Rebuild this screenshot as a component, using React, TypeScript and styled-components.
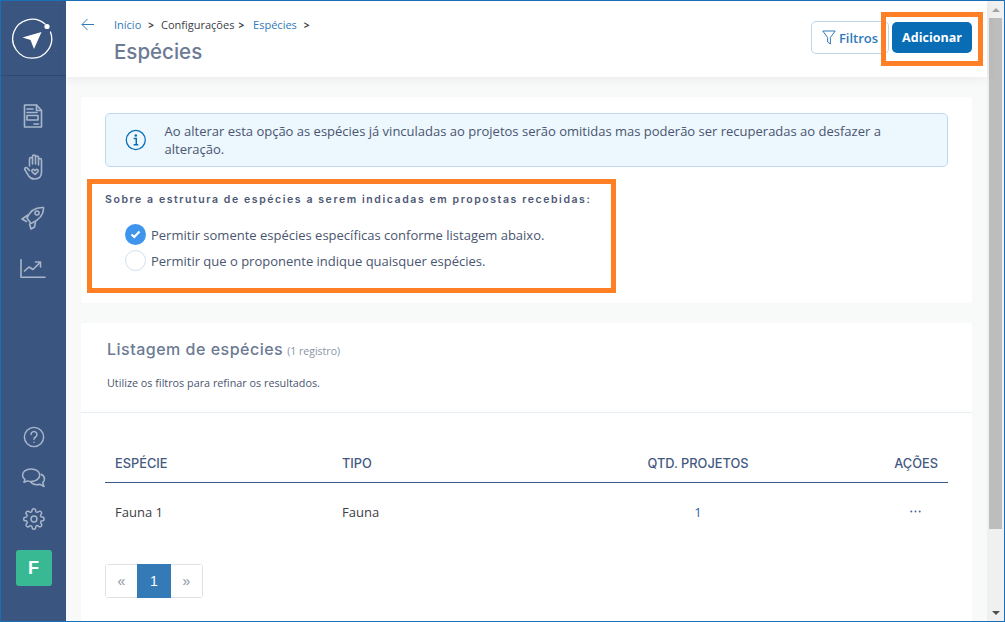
import React from 'react'
import styled, { createGlobalStyle } from 'styled-components'

const colors = {
  frame: '#1a6fb5',
  navy: '#3a5680',
  navyLine: '#2f4a72',
  icon: '#a9b6ca',
  link: '#2f7ab8',
  blue: '#086db5',
  heading: '#6c7a94',
  text: '#4a5570',
  dark: '#3c4048',
  orange: '#ff7f27',
  line: '#e6eef4',
}

const GlobalStyle = createGlobalStyle`
  html, body { margin: 0; padding: 0; height: 100%; overflow: hidden; }
  body { font-family: 'Open Sans', 'Liberation Sans', sans-serif; background: #fff; }
  * { box-sizing: border-box; }
`

const Frame = styled.div`
  display: flex;
  width: 1005px;
  height: 622px;
  border: 1px solid ${colors.frame};
  position: relative;
  overflow: hidden;
`

const Sidebar = styled.nav`
  width: 65px;
  flex: none;
  display: flex;
  flex-direction: column;
  align-items: center;
  background: ${colors.navy};
`

const LogoBox = styled.div`
  width: 100%;
  height: 75px;
  flex: none;
  display: flex;
  align-items: center;
  justify-content: center;
  padding-right: 3px;
  border-bottom: 1px solid ${colors.navyLine};
`

const NavTop = styled.div`
  display: flex;
  flex-direction: column;
  align-items: center;
  gap: 26px;
  padding: 28px 1px 0 0;
`

const NavBottom = styled.div`
  margin-top: auto;
  display: flex;
  flex-direction: column;
  align-items: center;
  gap: 20px;
  padding-bottom: 35px;
`

const Avatar = styled.div`
  width: 36px;
  height: 36px;
  border-radius: 3px;
  background: #38b993;
  color: #fff;
  font: 700 18px 'Liberation Sans', sans-serif;
  display: flex;
  align-items: center;
  justify-content: center;
`

const Main = styled.main`
  flex: 1;
  min-width: 0;
  display: flex;
  flex-direction: column;
  background: #f8f9f9;
`

const Header = styled.header`
  height: 76px;
  flex: none;
  display: flex;
  background: #fff;
  padding: 0 15px;
  box-shadow: 0 2px 10px rgba(60, 70, 90, 0.07);
  position: relative;
`

const BackLink = styled.div`
  width: 33px;
  display: flex;
  align-items: flex-start;
  padding-top: 17px;
`

const TitleBlock = styled.div`
  flex: 1;
  padding-top: 16px;
`

const Crumbs = styled.div`
  display: flex;
  align-items: center;
  height: 15px;
  font-size: 11px;
`

const Crumb = styled.span<{ $link?: boolean }>`
  color: ${({ $link }) => ($link ? colors.link : colors.dark)};
`

const CrumbSep = styled.span<{ $tight?: boolean }>`
  color: ${colors.dark};
  font-size: 10px;
  font-weight: 700;
  margin: ${({ $tight }) => ($tight ? '0 9px 0 4px' : '0 7px 0 7px')};
`

const Title = styled.h1`
  margin: 8px 0 0;
  font: 500 20.5px/24px 'Inter', 'Liberation Sans', sans-serif;
  color: ${colors.heading};
`

const Actions = styled.div`
  display: flex;
  gap: 3px;
  padding-top: 20px;
`

const FilterButton = styled.button`
  width: 78px;
  height: 33px;
  display: flex;
  align-items: center;
  justify-content: center;
  gap: 3px;
  padding: 0;
  background: #fff;
  border: 1px solid #bcd6ea;
  border-radius: 5px;
  color: ${colors.link};
  font: 600 13px 'Open Sans', sans-serif;
`

const AddButton = styled.button`
  width: 80px;
  height: 31px;
  margin-top: 1px;
  padding: 0;
  background: ${colors.blue};
  border: none;
  border-radius: 5px;
  color: #fff;
  font: 700 12.5px 'Open Sans', sans-serif;
`

const Content = styled.div`
  flex: 1;
  min-height: 0;
  overflow: hidden;
  padding: 20px 15px 0;
  display: flex;
  flex-direction: column;
  gap: 20px;
`

const Card = styled.section`
  background: #fff;
  border-radius: 3px;
`

const OptionsCard = styled(Card)`
  height: 206px;
  flex: none;
  padding: 16px 24px 0;
`

const Notice = styled.div`
  height: 54px;
  display: flex;
  align-items: center;
  gap: 18px;
  padding: 0 18px 0 19px;
  background: #ecf7fe;
  border: 1px solid #bfd9f2;
  border-radius: 5px;
  color: ${colors.text};
  font-size: 13px;
  line-height: 18px;
`

const OptionsTitle = styled.h2`
  margin: 25px 0 0;
  font: 600 10.5px/16px 'Inter', 'Liberation Sans', sans-serif;
  letter-spacing: 1.58px;
  color: #4d5873;
`

const Options = styled.div`
  display: flex;
  flex-direction: column;
  gap: 5px;
  margin: 16px 0 0 20px;
`

const Option = styled.label`
  display: flex;
  align-items: center;
  gap: 5px;
  height: 21px;
  font-size: 13px;
  color: ${colors.text};
`

const RadioDot = styled.span<{ $checked?: boolean }>`
  width: 21px;
  height: 21px;
  border-radius: 50%;
  display: flex;
  align-items: center;
  justify-content: center;
  background: ${({ $checked }) => ($checked ? '#3f94ee' : '#fff')};
  border: ${({ $checked }) => ($checked ? 'none' : '1px solid #cfe1ee')};
`

const ListCard = styled(Card)`
  flex: 1;
  min-height: 0;
`

const ListHead = styled.div`
  height: 90px;
  padding: 16px 26px 0;
  border-bottom: 1px solid ${colors.line};
`

const ListTitle = styled.h2`
  margin: 0;
  font: 500 16px/20px 'Inter', 'Liberation Sans', sans-serif;
  letter-spacing: 0.5px;
  color: ${colors.heading};
`

const ListCount = styled.small`
  margin-left: 4px;
  font: 400 10.5px 'Open Sans', sans-serif;
  letter-spacing: 0;
  color: #8a93a6;
`

const ListHint = styled.p`
  margin: 17px 0 0;
  font-size: 10.8px;
  line-height: 14px;
  color: ${colors.text};
`

const TableWrap = styled.div`
  padding: 33px 24px 0;
`

const Table = styled.table`
  width: 100%;
  border-collapse: collapse;
  table-layout: fixed;
`

const Th = styled.th<{ $align?: string; $width: number }>`
  width: ${({ $width }) => $width}px;
  height: 36px;
  padding: 0 10px;
  text-align: ${({ $align }) => $align || 'left'};
  font: 500 12.8px 'Inter', 'Liberation Sans', sans-serif;
  color: #43597f;
  border-bottom: 1px solid #3a5a8a;
`

const Td = styled.td<{ $align?: string }>`
  height: 58px;
  padding: 2px 10px 0;
  text-align: ${({ $align }) => $align || 'left'};
  font-size: 13px;
  color: ${colors.dark};
`

const CountLink = styled.span`
  color: #2c64a8;
`

const Dots = styled.svg`
  display: block;
  margin: 0 17px 2px auto;
`

const Pager = styled.div`
  display: flex;
  width: max-content;
  height: 34px;
  margin-top: 24px;
  border: 1px solid #dfe1e4;
  border-radius: 3px;
`

const PageItem = styled.span<{ $active?: boolean }>`
  width: ${({ $active }) => ($active ? '34px' : '31px')};
  margin: ${({ $active }) => ($active ? '-1px 0' : '0')};
  display: flex;
  align-items: center;
  justify-content: center;
  background: ${({ $active }) => ($active ? '#337ab7' : '#fff')};
  color: ${({ $active }) => ($active ? '#fff' : '#8a93a0')};
  font: 400 14px 'Liberation Sans', sans-serif;
`

const Scrollbar = styled.div`
  width: 17px;
  flex: none;
  display: flex;
  flex-direction: column;
  align-items: center;
  background: #f0f0f0;
`

const ScrollArrow = styled.div<{ $down?: boolean }>`
  height: 17px;
  flex: none;
  display: flex;
  align-items: center;
  justify-content: center;
  &::before {
    content: '';
    border-left: 4px solid transparent;
    border-right: 4px solid transparent;
    ${({ $down }) => ($down ? 'border-top: 4px solid #505050;' : 'border-bottom: 4px solid #a3a3a3;')}
  }
`

const ScrollThumb = styled.div`
  width: 13px;
  height: 511px;
  background: #bdbdbd;
`

const ScrollGap = styled.div`
  flex: 1;
`

const Highlight = styled.div<{ $left: number; $top: number; $width: number; $height: number }>`
  position: absolute;
  left: ${({ $left }) => $left}px;
  top: ${({ $top }) => $top}px;
  width: ${({ $width }) => $width}px;
  height: ${({ $height }) => $height}px;
  border: 5px solid ${colors.orange};
  pointer-events: none;
`

const Logo = () => (
  <svg width="42" height="42" viewBox="0 0 42 42" fill="none">
    <path d="M34 7A19.5 19.5 0 1 0 39.5 15" stroke="#fff" strokeWidth="1.3" strokeLinecap="round" />
    <circle cx="36" cy="9.5" r="2.6" fill="#fff" />
    <path d="M11.5 20.5 30.5 15 23 32 19.5 23Z" fill="#fff" />
  </svg>
)

const navProps = {
  fill: 'none',
  stroke: colors.icon,
  strokeWidth: 1.6,
  strokeLinecap: 'round' as const,
  strokeLinejoin: 'round' as const,
}

const ChartSvg = styled.svg`
  margin-top: 3px;
`

const FormIcon = () => (
  <svg width="20" height="24" viewBox="0 0 20 24" {...navProps}>
    <path d="M1.5 1h12l5 5.5V23h-17z" />
    <path d="M13.5 1v5.5h5M4 5h6M4 8.5h10" />
    <rect x="4" y="11.5" width="11" height="4.5" />
    <path d="M11 20h4.5" />
  </svg>
)

const HandIcon = () => (
  <svg width="20" height="26" viewBox="0 0 20 26" {...navProps}>
    <path d="M6.5 12V5a1.5 1.5 0 0 1 3 0v5M9.5 10V2.5a1.500 1.500 0 0 1 3 0V10M12.500 10V3.500a1.500 1.500 0 0 1 3 0V11M15.500 11V6a1.500 1.500 0 0 1 3 0v12c0 4.500-2.800 7-7 7-2.800 0-4.700-1.300-6-3.300L1.800 15.500c-.8-1.500 1.300-2.800 2.500-1.400L6.500 16.500" />
    <path d="M12 20.500 9.200 17.800c-1.300-1.500.8-3.200 2-2l.8.800.8-.800c1.200-1.200 3.300.5 2 2z" />
  </svg>
)

const RocketIcon = () => (
  <svg width="24" height="24" viewBox="0 0 24 24" {...navProps}>
    <path d="M22.500 1.500C15 1 9 5 6 12l4 5.500C18 14 23 9 22.500 1.500z" />
    <circle cx="16" cy="7" r="2" />
    <path d="M7 9 1 13l4.500 2.500M14.500 15.500 13.500 21 10 23l-1.500-5" />
  </svg>
)

const ChartIcon = () => (
  <ChartSvg width="26" height="19" viewBox="0 0 26 19" {...navProps}>
    <path d="M1 .8v17.400h24" />
    <path d="M4.500 12l4.500-4 4 2.500L20 3.500" />
    <path d="M15.500 3H20.500V8" />
  </ChartSvg>
)

const HelpIcon = () => (
  <svg width="22" height="22" viewBox="0 0 24 24" {...navProps}>
    <circle cx="12" cy="12" r="10.5" />
    <path d="M8.800 9.200a3.200 3.200 0 1 1 4.800 2.800c-1 .6-1.600 1.200-1.600 2.500" />
    <path d="M12 17.600v.2" />
  </svg>
)

const ChatIcon = () => (
  <svg width="25" height="20" viewBox="0 0 26 21" {...navProps}>
    <path d="M10.500 1c-5 0-9 2.800-9 6.500 0 1.800 1 3.400 2.500 4.500L3 15l4-1.500c1.100.4 2.300.6 3.500.6 5 0 9-2.900 9-6.600S15.500 1 10.500 1z" />
    <path d="M21 6.500c2.100 1 3.500 2.900 3.500 5 0 1.500-.7 2.900-1.800 3.900l1.300 4-4.500-2.400c-1 .3-2 .5-3 .5-2.700 0-5-1-6.500-2.800" />
  </svg>
)

const GearIcon = () => (
  <svg width="22" height="22" viewBox="0 0 24 24" {...navProps}>
    <circle cx="12" cy="12" r="3.2" />
    <path d="M19.400 15a1.700 1.700 0 0 0 .3 1.800l.1.100a2 2 0 1 1-2.900 2.900l-.1-.1a1.700 1.700 0 0 0-2.900 1.200v.2a2 2 0 1 1-4 0v-.1a1.700 1.700 0 0 0-2.900-1.200l-.1.100a2 2 0 1 1-2.900-2.900l.1-.1a1.700 1.700 0 0 0-1.200-2.900h-.2a2 2 0 1 1 0-4h.1a1.700 1.700 0 0 0 1.200-2.900l-.1-.1a2 2 0 1 1 2.900-2.900l.1.100a1.700 1.700 0 0 0 2.900-1.200v-.2a2 2 0 1 1 4 0v.1a1.700 1.700 0 0 0 2.900 1.200l.1-.1a2 2 0 1 1 2.900 2.900l-.1.100a1.700 1.700 0 0 0 1.200 2.900h.2a2 2 0 1 1 0 4h-.1a1.700 1.700 0 0 0-1.500 1z" />
  </svg>
)

const BackArrow = () => (
  <svg width="13" height="13" viewBox="0 0 13 13" fill="none" stroke={colors.link} strokeWidth="1">
    <path d="M13 6.5H1M6.5 1 1 6.5 6.5 12" />
  </svg>
)

const FunnelIcon = () => (
  <svg width="14" height="15" viewBox="0 0 14 15" fill="none" stroke={colors.link} strokeWidth="1" strokeLinejoin="round">
    <path d="M.8 1h12.400L8.400 7.500V14L5.600 12V7.500z" />
  </svg>
)

const InfoIcon = () => (
  <svg width="22" height="22" viewBox="0 0 22 22" fill="none">
    <circle cx="11" cy="11" r="9.7" stroke={colors.blue} strokeWidth="1.3" />
    <circle cx="11" cy="6.5" r="1.3" fill={colors.blue} />
    <path d="M8.800 9.500H11.500V15.500M8.800 15.800H13.500" stroke={colors.blue} strokeWidth="1.5" />
  </svg>
)

const CheckMark = () => (
  <svg width="11" height="9" viewBox="0 0 11 9" fill="none" stroke="#fff" strokeWidth="2.2">
    <path d="M1.500 4.500 4.300 7 9.500 1.500" />
  </svg>
)

const DotsIcon = () => (
  <Dots width="11" height="3" viewBox="0 0 11 3" fill="#4a6a98">
    <circle cx="1.3" cy="1.5" r="1" />
    <circle cx="5.5" cy="1.5" r="1" />
    <circle cx="9.7" cy="1.5" r="1" />
  </Dots>
)

export default function App() {
  return (
    <Frame>
      <GlobalStyle />
      <Sidebar>
        <LogoBox>
          <Logo />
        </LogoBox>
        <NavTop>
          <FormIcon />
          <HandIcon />
          <RocketIcon />
          <ChartIcon />
        </NavTop>
        <NavBottom>
          <HelpIcon />
          <ChatIcon />
          <GearIcon />
          <Avatar>F</Avatar>
        </NavBottom>
      </Sidebar>

      <Main>
        <Header>
          <BackLink>
            <BackArrow />
          </BackLink>
          <TitleBlock>
            <Crumbs>
              <Crumb $link>Início</Crumb>
              <CrumbSep>&gt;</CrumbSep>
              <Crumb>Configurações</Crumb>
              <CrumbSep $tight>&gt;</CrumbSep>
              <Crumb $link>Espécies</Crumb>
              <CrumbSep>&gt;</CrumbSep>
            </Crumbs>
            <Title>Espécies</Title>
          </TitleBlock>
          <Actions>
            <FilterButton>
              <FunnelIcon />
              Filtros
            </FilterButton>
            <AddButton>Adicionar</AddButton>
          </Actions>
        </Header>

        <Content>
          <OptionsCard>
            <Notice>
              <InfoIcon />
              <span>
                Ao alterar esta opção as espécies já vinculadas ao projetos serão omitidas mas poderão ser recuperadas
                ao desfazer a alteração.
              </span>
            </Notice>
            <OptionsTitle>Sobre a estrutura de espécies a serem indicadas em propostas recebidas:</OptionsTitle>
            <Options>
              <Option>
                <RadioDot $checked>
                  <CheckMark />
                </RadioDot>
                Permitir somente espécies específicas conforme listagem abaixo.
              </Option>
              <Option>
                <RadioDot />
                Permitir que o proponente indique quaisquer espécies.
              </Option>
            </Options>
          </OptionsCard>

          <ListCard>
            <ListHead>
              <ListTitle>
                Listagem de espécies
                <ListCount>(1 registro)</ListCount>
              </ListTitle>
              <ListHint>Utilize os filtros para refinar os resultados.</ListHint>
            </ListHead>
            <TableWrap>
              <Table>
                <thead>
                  <tr>
                    <Th $width={227}>ESPÉCIE</Th>
                    <Th $width={243}>TIPO</Th>
                    <Th $width={246} $align="center">
                      QTD. PROJETOS
                    </Th>
                    <Th $width={127} $align="right">
                      AÇÕES
                    </Th>
                  </tr>
                </thead>
                <tbody>
                  <tr>
                    <Td>Fauna 1</Td>
                    <Td>Fauna</Td>
                    <Td $align="center">
                      <CountLink>1</CountLink>
                    </Td>
                    <Td $align="right">
                      <DotsIcon />
                    </Td>
                  </tr>
                </tbody>
              </Table>
              <Pager>
                <PageItem>«</PageItem>
                <PageItem $active>1</PageItem>
                <PageItem>»</PageItem>
              </Pager>
            </TableWrap>
          </ListCard>
        </Content>
      </Main>

      <Scrollbar>
        <ScrollArrow />
        <ScrollThumb />
        <ScrollGap />
        <ScrollArrow $down />
      </Scrollbar>

      <Highlight $left={880} $top={11} $width={102} $height={54} />
      <Highlight $left={86} $top={178} $width={529} $height={114} />
    </Frame>
  )
}
